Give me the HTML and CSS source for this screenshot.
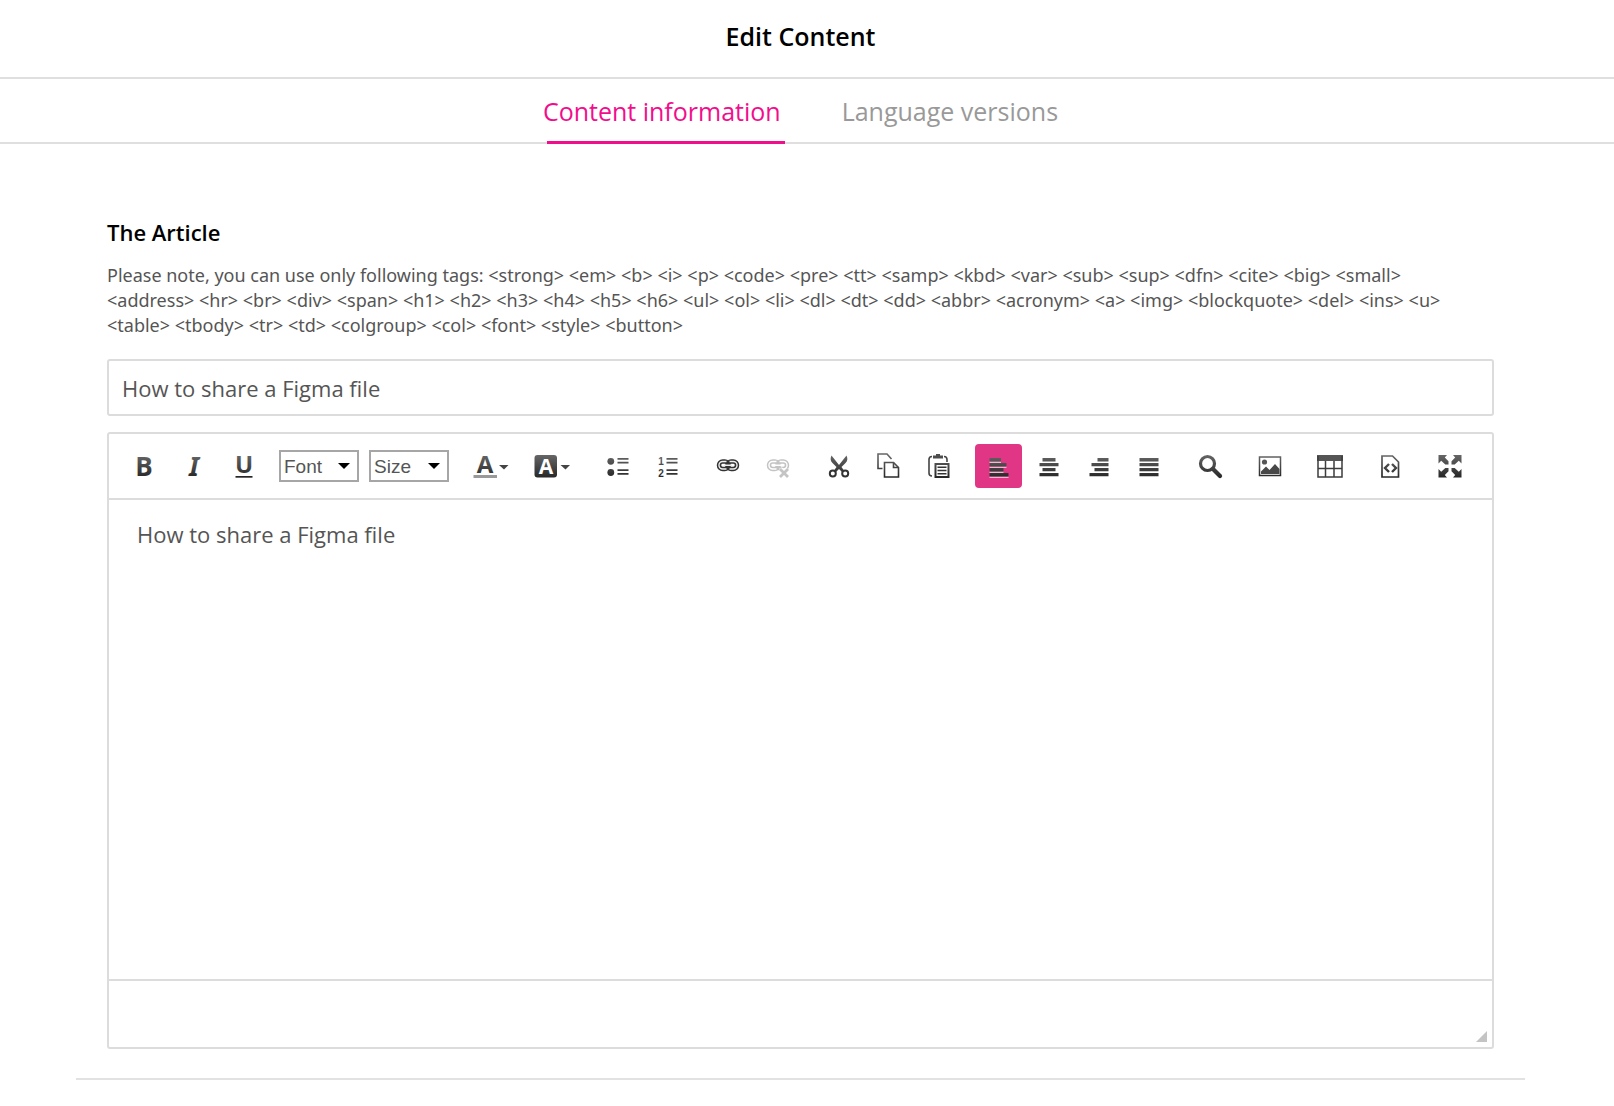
FILE: index.html
```
<!DOCTYPE html>
<html lang="en">
<head>
    <meta charset="UTF-8">
    <meta name="viewport" content="width=device-width, initial-scale=1.0">
    <title>Edit Content</title>
    <link rel="stylesheet" href="styles.css">
</head>
<body>
    <svg class="defs" width="0" height="0" aria-hidden="true">
        <defs>
            <linearGradient id="ink" gradientUnits="userSpaceOnUse" x1="0" y1="1" x2="0" y2="24">
                <stop offset="0" stop-color="#666"/>
                <stop offset="1" stop-color="#262626"/>
            </linearGradient>
        </defs>
    </svg>

    <header class="page-header">
        <h1>Edit Content</h1>
    </header>

    <nav class="tabs">
        <a href="#content" class="tab active">Content information</a>
        <a href="#languages" class="tab">Language versions</a>
    </nav>

    <main class="container" id="content">
        <h2><label for="title">The Article</label></h2>
        <p class="note">
            Please note, you can use only following tags: &lt;strong&gt; &lt;em&gt; &lt;b&gt; &lt;i&gt; &lt;p&gt; &lt;code&gt; &lt;pre&gt; &lt;tt&gt; &lt;samp&gt; &lt;kbd&gt; &lt;var&gt; &lt;sub&gt; &lt;sup&gt; &lt;dfn&gt; &lt;cite&gt; &lt;big&gt; &lt;small&gt;<br>
            &lt;address&gt; &lt;hr&gt; &lt;br&gt; &lt;div&gt; &lt;span&gt; &lt;h1&gt; &lt;h2&gt; &lt;h3&gt; &lt;h4&gt; &lt;h5&gt; &lt;h6&gt; &lt;ul&gt; &lt;ol&gt; &lt;li&gt; &lt;dl&gt; &lt;dt&gt; &lt;dd&gt; &lt;abbr&gt; &lt;acronym&gt; &lt;a&gt; &lt;img&gt; &lt;blockquote&gt; &lt;del&gt; &lt;ins&gt; &lt;u&gt;<br>
            &lt;table&gt; &lt;tbody&gt; &lt;tr&gt; &lt;td&gt; &lt;colgroup&gt; &lt;col&gt; &lt;font&gt; &lt;style&gt; &lt;button&gt;
        </p>

        <input type="text" id="title" class="title-input" value="How to share a Figma file">

        <div class="editor">
            <div class="toolbar" role="toolbar" aria-label="Editor toolbar">
                <div class="group first">
                    <button type="button" class="tool" aria-label="Bold">
                        <svg width="24" height="24" viewBox="0 0 24 24"><text class="glyph" x="12" y="22" font-size="26">B</text></svg>
                    </button>
                    <button type="button" class="tool" aria-label="Italic">
                        <svg width="24" height="24" viewBox="0 0 24 24"><text class="glyph italic" x="12" y="22" font-size="26">I</text></svg>
                    </button>
                    <button type="button" class="tool" aria-label="Underline">
                        <svg width="24" height="24" viewBox="0 0 24 24"><text class="glyph" x="12" y="19" font-size="24">U</text><path d="M3.500 22h17v1.700h-17z" fill="#262626"/></svg>
                    </button>
                </div>

                <div class="group selects">
                    <span class="select"><select aria-label="Font"><option>Font</option></select></span>
                    <span class="select"><select aria-label="Size"><option>Size</option></select></span>
                </div>

                <div class="group colors">
                    <button type="button" class="tool wide" aria-label="Text color">
                        <svg width="36" height="24" viewBox="0 0 36 24"><text class="glyph" x="12" y="19" font-size="24">A</text><path d="M.5 21H24v3H.5z" fill="#999"/><path d="M26 11h9.500l-4.500 4.500z" fill="#444"/></svg>
                    </button>
                    <button type="button" class="tool wide" aria-label="Background color">
                        <svg width="36" height="24" viewBox="0 0 36 24"><rect x=".5" y="1" width="22.500" height="22.500" rx="3" fill="url(#ink)"/><text class="glyph white" x="12" y="20" font-size="21">A</text><path d="M26.500 11H36l-4.500 4.500z" fill="#444"/></svg>
                    </button>
                </div>

                <div class="group">
                    <button type="button" class="tool" aria-label="Bulleted list">
                        <svg width="24" height="24" viewBox="0 0 24 24" fill="url(#ink)"><circle cx="4.800" cy="7.300" r="3.400"/><circle cx="4.800" cy="18.500" r="3.400"/><path d="M11.500 4h11v1.800h-11zM11.500 7.700h11v1.800h-11zM11.500 15.200h11V17h-11zM11.500 19h11v1.800h-11z"/></svg>
                    </button>
                    <button type="button" class="tool" aria-label="Numbered list">
                        <svg width="24" height="24" viewBox="0 0 24 24" fill="url(#ink)"><text class="glyph digit" x="5" y="11" font-size="10">1</text><text class="glyph digit" x="5" y="23" font-size="10">2</text><path d="M10.500 4h11v1.800h-11zM10.500 7.700h11v1.800h-11zM10.500 15.200h11V17h-11zM10.500 19h11v1.800h-11z"/></svg>
                    </button>
                </div>

                <div class="group">
                    <button type="button" class="tool" aria-label="Link">
                        <svg width="24" height="24" viewBox="0 0 24 24" fill="none"><g stroke="#333" stroke-width="4.500"><rect x="3" y="7.500" width="9.500" height="7.500" rx="3.700"/><rect x="11.500" y="7.500" width="9.500" height="7.500" rx="3.700"/></g><g stroke="#eee" stroke-width="1.400"><path d="M10.500 15H6.700a3.700 3.700 0 0 1 0-7.500h3.800M13.500 7.500h3.800a3.700 3.700 0 0 1 0 7.500h-3.800M8 11.300h8"/></g></svg>
                    </button>
                    <button type="button" class="tool" aria-label="Unlink" disabled>
                        <svg width="24" height="24" viewBox="0 0 24 24" fill="none"><g stroke="#c4c4c4" stroke-width="4.500"><rect x="3" y="7.500" width="9.500" height="7.500" rx="3.700"/><rect x="11.500" y="7.500" width="9.500" height="7.500" rx="3.700"/></g><g stroke="#fff" stroke-width="1.400"><path d="M10.500 15H6.700a3.700 3.700 0 0 1 0-7.500h3.800M13.500 7.500h3.800a3.700 3.700 0 0 1 0 7.500h-3.800M8 11.300h8"/></g><path d="M14 15l8 8M22 15l-8 8" stroke="#fff" stroke-width="5"/><path d="M14 15l8 8M22 15l-8 8" stroke="#c4c4c4" stroke-width="2.800"/></svg>
                    </button>
                </div>

                <div class="group clipboard">
                    <button type="button" class="tool" aria-label="Cut">
                        <svg width="24" height="24" viewBox="0 0 24 24"><path d="M4.500 1.500C3 4.500 3.500 7 5.500 9l4 4-2.500 3.500 2 1.500 3-3 3 3 2-1.500-2.500-3.500 4-4c2-2 2.500-4.500 1-7.500L12 11z" fill="url(#ink)"/><g fill="none" stroke="#333" stroke-width="2"><circle cx="5.800" cy="19.500" r="3"/><circle cx="18.200" cy="19.500" r="3"/></g></svg>
                    </button>
                    <button type="button" class="tool" aria-label="Copy">
                        <svg width="24" height="24" viewBox="0 0 24 24" fill="none" stroke="url(#ink)" stroke-width="1.600"><path d="M5.500 14.500H1V0h9l4.500 5"/><path d="M7.500 8.500h9l5 5V23h-14z"/><path d="M16.500 8.500v5h5"/></svg>
                    </button>
                    <button type="button" class="tool" aria-label="Paste">
                        <svg width="24" height="24" viewBox="0 0 24 24"><path d="M5 2.500c-2 0-3 1-3 3V19c0 2 1 3 3 3M17 2.500c2 0 3 1 3 3V8" fill="none" stroke="#444" stroke-width="1.600"/><path d="M6 4.500V1.500h3V0h4v1.500h3v3z" fill="#4d4d4d"/><path d="M8.500 10h13v13h-13z" fill="none" stroke="url(#ink)" stroke-width="2"/><path d="M10.500 12.500h9V14h-9zM10.500 15.800h9v1.500h-9zM10.500 19h9v1.500h-9z" fill="#333"/></svg>
                    </button>
                </div>

                <div class="group">
                    <button type="button" class="tool active" aria-label="Align left" aria-pressed="true">
                        <svg width="24" height="24" viewBox="0 0 24 24"><path d="M2.500 7.500h11.500V9H2.500zM2.500 12.500h17V14h-17zM2.500 17.500h14V19h-14zM2.500 22.500h19V24h-19z" fill="#f5b5d3"/><path d="M2.500 4H14v3.500H2.500zM2.500 9h17v3.500h-17zM2.500 14h14v3.500h-14zM2.500 19h19v3.500h-19z" fill="url(#ink)"/></svg>
                    </button>
                    <button type="button" class="tool" aria-label="Center">
                        <svg width="24" height="24" viewBox="0 0 24 24" fill="url(#ink)"><path d="M5.500 4h13v3.500h-13zM2.500 9h19v3.300h-19zM5.500 14h13v3.300h-13zM2.500 19h19v3.300h-19z"/></svg>
                    </button>
                    <button type="button" class="tool" aria-label="Align right">
                        <svg width="24" height="24" viewBox="0 0 24 24" fill="url(#ink)"><path d="M10.500 4h11v3.500h-11zM4.500 9h17v3.300h-17zM7.500 14h14v3.300h-14zM2.500 19h19v3.300h-19z"/></svg>
                    </button>
                    <button type="button" class="tool" aria-label="Justify">
                        <svg width="24" height="24" viewBox="0 0 24 24" fill="url(#ink)"><path d="M2.500 4h19v3.500h-19zM2.500 9h19v3.300h-19zM2.500 14h19v3.300h-19zM2.500 19h19v3.300h-19z"/></svg>
                    </button>
                </div>

                <div class="group find">
                    <button type="button" class="tool" aria-label="Find">
                        <svg width="24" height="24" viewBox="0 0 24 24" fill="none" stroke="url(#ink)"><circle cx="9.500" cy="9.500" r="7" stroke-width="3.200"/><path d="M15 15l7 7" stroke-width="4.300" stroke-linecap="round"/></svg>
                    </button>
                </div>
                <div class="group">
                    <button type="button" class="tool" aria-label="Image">
                        <svg width="24" height="24" viewBox="0 0 24 24"><rect x="1.500" y="3" width="21" height="18.500" fill="none" stroke="url(#ink)" stroke-width="1.500"/><circle cx="6.500" cy="8" r="2.600" fill="#555"/><path d="M3 20v-2.500l5-5 3.500 3.500 5.500-6 4.500 5v5z" fill="#484848"/></svg>
                    </button>
                </div>
                <div class="group">
                    <button type="button" class="tool" aria-label="Table">
                        <svg width="26" height="24" viewBox="0 0 26 24"><path d="M0 1h26v6H0z" fill="#555"/><path d="M1 2v21h24V2M1 14.500h24M8.500 7v16M17 7v16" fill="none" stroke="#3d3d3d" stroke-width="1.500"/></svg>
                    </button>
                </div>
                <div class="group">
                    <button type="button" class="tool" aria-label="Source">
                        <svg width="24" height="24" viewBox="0 0 24 24" fill="none" stroke="url(#ink)"><path d="M4 2h10.500l6 6v15H4z" stroke-width="1.700"/><path d="M11 10l-4 4 4 4M14 10l4 4-4 4" stroke-width="2.400"/></svg>
                    </button>
                </div>
                <div class="group">
                    <button type="button" class="tool" aria-label="Maximize">
                        <svg width="24" height="24" viewBox="0 0 24 24" fill="url(#ink)"><path d="M.5 1H9L6.800 3.500l3.700 3.700v3.300H7.300L3.200 6.800.5 9.500z"/><path d="M23.500 1H15l2.200 2.500-3.700 3.700v3.300h3.200l4.100-3.700 2.700 2.700z"/><path d="M.5 23.500H9L6.800 21l3.700-3.700V14H7.300l-4.100 3.700L.5 15z"/><path d="M23.500 23.500H15l2.200-2.500-3.700-3.700V14h3.200l4.100 3.700 2.700-2.700z"/></svg>
                    </button>
                </div>
            </div>

            <textarea class="editor-body" aria-label="Article content">How to share a Figma file</textarea>

            <div class="editor-footer">
                <span class="resizer"></span>
            </div>
        </div>
    </main>
</body>
</html>
```
FILE: styles.css
```
* {
    box-sizing: border-box;
}

body {
    margin: 0;
    padding: 0;
    background-color: #fff;
    color: #555;
    font-family: "Open Sans", sans-serif;
}

.defs {
    display: block;
}

.page-header {
    padding: 19px 13px 23px 0;
    border-bottom: 2px solid #dfdfdf;
    text-align: center;
}

.page-header h1 {
    margin: 0;
    font-size: 25px;
    font-weight: 600;
    line-height: 35px;
    color: #000;
}

.tabs {
    display: flex;
    justify-content: center;
    gap: 61px;
    padding-right: 13px;
    border-bottom: 2px solid #dfdfdf;
}

.tab {
    position: relative;
    padding: 15px 0 13px;
    font-size: 25px;
    line-height: 35px;
    color: #999;
    text-decoration: none;
}

.tab.active {
    color: #f20d8c;
}

.tab.active::after {
    content: "";
    position: absolute;
    left: 4px;
    right: -4px;
    bottom: -2px;
    height: 3px;
    background-color: #f20d8c;
}

.container {
    margin: 0 89px 0 76px;
    padding: 72px 31px 29px;
    border-bottom: 2px solid #e2e2e2;
}

h2 {
    margin: 0 0 15px;
    font-size: 22px;
    font-weight: 600;
    line-height: 32px;
    color: #000;
}

.note {
    margin: 0 0 21px;
    font-family: "Noto Sans", sans-serif;
    font-size: 18px;
    line-height: 25px;
}

.title-input {
    display: block;
    width: 100%;
    height: 57px;
    padding: 0 13px;
    border: 2px solid #dcdcdc;
    border-radius: 3px;
    color: #555;
    font-family: inherit;
    font-size: 22px;
}

.title-input:focus,
.editor-body:focus {
    outline: none;
}

.editor {
    margin-top: 16px;
    border: 2px solid #dcdcdc;
    border-radius: 3px;
}

.toolbar {
    display: flex;
    flex-wrap: wrap;
    align-items: center;
    padding: 10px 0;
    border-bottom: 2px solid #dcdcdc;
}

.group {
    display: flex;
    gap: 3px;
    margin-left: 13px;
}

.group.first {
    margin-left: 11px;
}

.group.selects {
    gap: 10px;
    margin-left: 12px;
}

.group.clipboard,
.group.find {
    margin-left: 14px;
}

.tool {
    display: flex;
    align-items: center;
    justify-content: center;
    width: 47px;
    height: 44px;
    padding: 0;
    border: none;
    border-radius: 4px;
    background: none;
    cursor: pointer;
}

.tool.wide {
    width: 58px;
}

.tool.active {
    background-color: #e03685;
}

.tool:disabled {
    cursor: default;
}

.tool svg {
    display: block;
    overflow: visible;
}

.glyph {
    font-family: "Open Sans", sans-serif;
    font-weight: 700;
    text-anchor: middle;
    fill: url(#ink);
}

.glyph.italic {
    font-family: "Noto Sans", sans-serif;
    font-style: italic;
}

.glyph.digit {
    font-family: "Liberation Sans", Arial, sans-serif;
}

.glyph.white {
    fill: #fff;
}

.select {
    position: relative;
    display: block;
}

.select select {
    display: block;
    width: 80px;
    height: 32px;
    padding: 0 3px;
    border: 2px solid #a6a6a6;
    border-radius: 0;
    background: #fff;
    color: #555;
    font-family: "Liberation Sans", Arial, sans-serif;
    font-size: 19px;
    appearance: none;
}

.select::after {
    content: "";
    position: absolute;
    right: 9px;
    top: 13px;
    border: 6px solid transparent;
    border-top-color: #000;
    border-bottom: none;
    pointer-events: none;
}

.editor-body {
    display: block;
    width: 100%;
    height: 479px;
    padding: 18px 28px;
    border: none;
    resize: none;
    color: #555;
    font-family: inherit;
    font-size: 22px;
    line-height: 32px;
}

.editor-footer {
    display: flex;
    justify-content: flex-end;
    align-items: flex-end;
    height: 68px;
    padding: 5px;
    border-top: 2px solid #dcdcdc;
}

.resizer {
    border-left: 11px solid transparent;
    border-bottom: 11px solid #c4c4c4;
}
```
